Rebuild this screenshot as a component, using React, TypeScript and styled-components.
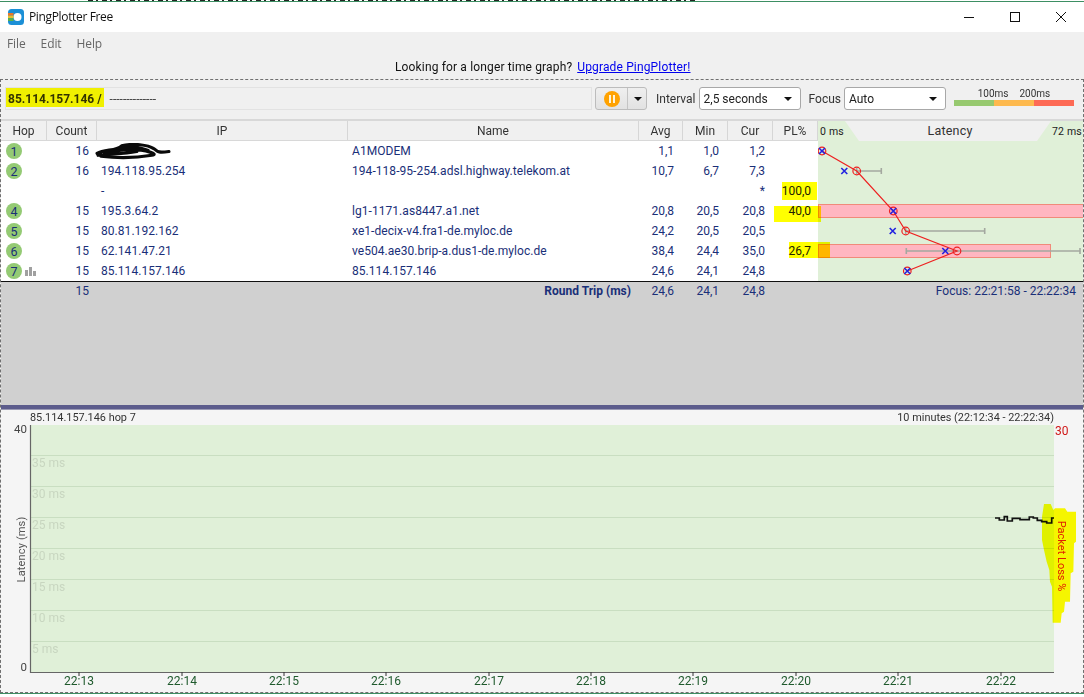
import React from "react";
import styled, { createGlobalStyle } from "styled-components";

const Global = createGlobalStyle`
  html, body { margin: 0; padding: 0; background: #fff; }
  #root { width: 1084px; height: 697px; overflow: hidden; }
  * { box-sizing: border-box; }
`;

const Page = styled.div`
  width: 1084px;
  height: 697px;
  display: flex;
  flex-direction: column;
  background: #fff;
  font-family: Roboto, "Liberation Sans", sans-serif;
  font-size: 12px;
  color: #333;
  overflow: hidden;
`;
const TopStrip = styled.div`
  height: 2px;
  flex: none;
  border-bottom: 1px solid #3d8f63;
  background: repeating-linear-gradient(90deg, #222 0 5px, #fff 5px 8px, #222 8px 10px, #fff 10px 14px) 88px 0 / 607px 1px no-repeat;
`;
const TitleBar = styled.div`
  height: 30px;
  flex: none;
  display: flex;
  align-items: center;
  padding-left: 8px;
  background: #fff;
`;
const TitleText = styled.span`
  margin-left: 5px;
  margin-top: -2px;
  font-family: "Open Sans", sans-serif;
  font-size: 12px;
  letter-spacing: -0.35px;
  color: #111;
  flex: 1;
`;
const WinButton = styled.button`
  width: 46px;
  height: 30px;
  padding: 0;
  border: 0;
  background: transparent;
  display: flex;
  align-items: center;
  justify-content: center;
`;
const MenuBar = styled.div`
  height: 23px;
  flex: none;
  display: flex;
  align-items: center;
  gap: 15px;
  padding-left: 7px;
  background: #f0f0f0;
  color: #666;
  font-family: "Open Sans", sans-serif;
  font-size: 12px;
  letter-spacing: -0.1px;
`;
const AdRow = styled.div`
  height: 24px;
  flex: none;
  display: flex;
  justify-content: flex-start;
  align-items: center;
  gap: 5px;
  padding-left: 395px;
  background: #f0f0f0;
  color: #111;
  font-size: 12px;
  letter-spacing: 0.15px;
`;
const AdLink = styled.a`
  color: #0000ee;
  text-decoration: underline;
`;
const Frame = styled.div`
  height: 614px;
  flex: none;
  display: flex;
  flex-direction: column;
  border: 1px dashed #707070;
  background: #f0f0f0;
`;
const Toolbar = styled.div`
  height: 41px;
  flex: none;
  display: flex;
  align-items: center;
  padding: 0 6px 2px 4px;
  border-bottom: 2px solid #d8d8d8;
  background: #f0f0f0;
`;
const TargetField = styled.div`
  position: relative;
  width: 587px;
  height: 23px;
  display: flex;
  align-items: center;
  padding-left: 2px;
  border: 1px solid #e2e2e2;
  color: #444;
`;
const TargetName = styled.b`
  font-size: 12px;
  color: #333;
  margin-right: 3px;
`;
const TargetDashes = styled.span`
  margin-left: 5px;
  font-size: 12px;
`;
const Mark = styled.span<{ $l: number; $t: number; $w: number; $h: number }>`
  position: absolute;
  left: ${(p) => p.$l}px;
  top: ${(p) => p.$t}px;
  width: ${(p) => p.$w}px;
  height: ${(p) => p.$h}px;
  background: #ffff00;
  mix-blend-mode: multiply;
`;
const SplitButton = styled.div`
  margin-left: 3px;
  width: 52px;
  height: 23px;
  display: grid;
  grid-template-columns: 31px 21px;
  border: 1px solid #bcbcbc;
  border-radius: 3px;
  background: linear-gradient(#efefef, #e2e2e2);
`;
const SplitPart = styled.div`
  display: flex;
  align-items: center;
  justify-content: center;
  & + & { border-left: 1px solid #c4c4c4; }
`;
const PauseDisc = styled.span`
  width: 16px;
  height: 16px;
  border-radius: 50%;
  background: #ffa200;
  display: flex;
  justify-content: center;
  align-items: center;
  gap: 2px;
`;
const PauseBar = styled.i`
  width: 2px;
  height: 8px;
  background: #fff3d8;
`;
const Caret = styled.span`
  width: 0;
  height: 0;
  border-left: 4px solid transparent;
  border-right: 4px solid transparent;
  border-top: 4px solid #111;
`;
const ToolLabel = styled.span<{ $ml: number }>`
  margin-left: ${(p) => p.$ml}px;
  margin-right: 3px;
  color: #333;
  font-size: 12px;
`;
const Select = styled.div<{ $w: number }>`
  width: ${(p) => p.$w}px;
  height: 23px;
  display: flex;
  align-items: center;
  justify-content: space-between;
  padding: 0 8px 0 4px;
  background: #fff;
  border: 1px solid #a8a8a8;
  border-radius: 3px;
  color: #222;
`;
const Legend = styled.div`
  margin-left: 8px;
  width: 120px;
  display: flex;
  flex-direction: column;
  align-self: flex-start;
  padding-top: 9px;
`;
const LegendLabels = styled.div`
  display: flex;
  justify-content: center;
  gap: 11px;
  height: 11px;
  line-height: 10px;
  font-size: 10px;
  color: #333;
`;
const LegendBar = styled.div`
  height: 6px;
  display: grid;
  grid-template-columns: 1fr 1fr 1fr;
`;
const LegendSwatch = styled.i<{ $c: string }>`
  background: ${(p) => p.$c};
`;
const columns = "46px 50px 251px 291px 44px 45px 45px 45px";
const HeaderRow = styled.div`
  height: 20px;
  flex: none;
  display: flex;
  background: #f0f0f0;
`;
const HeaderCells = styled.div`
  width: 817px;
  display: grid;
  grid-template-columns: ${columns};
  border-bottom: 1px solid #d8d8d8;
`;
const HeaderCell = styled.div`
  display: flex;
  align-items: center;
  justify-content: center;
  border-right: 1px solid #d6d6d6;
  color: #333;
  font-size: 12px;
`;
const LatencyHead = styled.div`
  position: relative;
  flex: 1;
  background: #e0f0d8;
  display: flex;
  justify-content: space-between;
  align-items: center;
  padding: 0 1px 0 2px;
  font-size: 10.5px;
  color: #222;
  letter-spacing: 0.2px;
`;
const LatencyTab = styled.div`
  position: absolute;
  left: 27px;
  right: 32px;
  top: 0;
  bottom: 0;
  background: #f0f0f0;
  clip-path: polygon(0 0, 100% 0, calc(100% - 14px) 100%, 14px 100%);
  display: flex;
  align-items: center;
  justify-content: center;
  font-size: 12.5px;
  padding: 0 0 2px 4px;
  color: #333;
`;
const Body = styled.div`
  position: relative;
  flex: none;
  height: 140px;
  display: flex;
  background: #fff;
`;
const Rows = styled.div`
  width: 817px;
  display: flex;
  flex-direction: column;
`;
const Row = styled.div`
  height: 20px;
  display: grid;
  grid-template-columns: ${columns};
  align-items: center;
  color: #1a2f78;
`;
const HopCell = styled.div`
  display: flex;
  align-items: center;
  padding-left: 5px;
  gap: 3px;
`;
const HopDisc = styled.span`
  width: 16px;
  height: 16px;
  border-radius: 50%;
  background: #94ca74;
  display: flex;
  align-items: center;
  justify-content: center;
  font-size: 12.5px;
  color: #1a2f78;
`;
const Num = styled.div<{ $pad: number }>`
  text-align: right;
  padding-right: ${(p) => p.$pad}px;
`;
const Text = styled.div`
  padding-left: 4px;
  white-space: nowrap;
  letter-spacing: 0.05px;
`;
const PlCell = styled(Num)`
  color: #222;
`;
const LatencyPlot = styled.svg`
  display: block;
  width: 265px;
  height: 140px;
  background: #e0f0d8;
`;
const Scribble = styled.svg`
  position: absolute;
  left: 90px;
  top: 2px;
  width: 84px;
  height: 17px;
`;
const Footer = styled.div`
  height: 124px;
  flex: none;
  border-top: 1px solid #111;
  background: #d0d0d0;
  color: #1a2f78;
  position: relative;
`;
const FooterRow = styled.div`
  display: grid;
  grid-template-columns: 46px 50px 542px 44px 45px 45px 1fr;
  height: 18px;
  align-items: center;
`;
const FooterTitle = styled.b`
  text-align: right;
  padding-right: 8px;
  font-size: 12px;
`;
const FooterFocus = styled.div`
  text-align: right;
  padding-right: 7px;
`;
const Divider = styled.div`
  height: 5px;
  flex: none;
  background: #5c5c8c;
  border-bottom: 1px solid #9a9ab4;
`;
const Lower = styled.div`
  flex: 1;
  min-height: 0;
  display: flex;
  flex-direction: column;
  background: #f5f5f5;
`;
const LowerHead = styled.div`
  height: 15px;
  flex: none;
  display: flex;
  justify-content: space-between;
  align-items: center;
  padding: 0 29px;
  font-size: 10.9px;
  color: #333;
`;
const Graph = styled.svg`
  display: block;
  flex: none;
  width: 1082px;
  height: 267px;
  overflow: visible;
`;
const GraphLabel = styled.text`
  font-family: Roboto, sans-serif;
`;
const Blob = styled.polygon`
  fill: #ffff00;
  mix-blend-mode: multiply;
`;
const Bottom = styled.div`
  flex: 1;
  border-top: 1px solid #3d8f63;
  background: #fff;
`;

type Hop = { n?: number; count?: number; ip: string; name: string; avg: string; min: string; cur: string; pl: string; bars?: boolean; hide?: boolean };
const hops: Hop[] = [
  { n: 1, count: 16, ip: "192.168.0.1", name: "A1MODEM", avg: "1,1", min: "1,0", cur: "1,2", pl: "", hide: true },
  { n: 2, count: 16, ip: "194.118.95.254", name: "194-118-95-254.adsl.highway.telekom.at", avg: "10,7", min: "6,7", cur: "7,3", pl: "" },
  { ip: "-", name: "", avg: "", min: "", cur: "*", pl: "100,0" },
  { n: 4, count: 15, ip: "195.3.64.2", name: "lg1-1171.as8447.a1.net", avg: "20,8", min: "20,5", cur: "20,8", pl: "40,0" },
  { n: 5, count: 15, ip: "80.81.192.162", name: "xe1-decix-v4.fra1-de.myloc.de", avg: "24,2", min: "20,5", cur: "20,5", pl: "" },
  { n: 6, count: 15, ip: "62.141.47.21", name: "ve504.ae30.brip-a.dus1-de.myloc.de", avg: "38,4", min: "24,4", cur: "35,0", pl: "26,7" },
  { n: 7, count: 15, ip: "85.114.157.146", name: "85.114.157.146", avg: "24,6", min: "24,1", cur: "24,8", pl: "", bars: true },
];

const Cross = ({ x, y }: { x: number; y: number }) => (
  <path d={`M${x - 3} ${y - 3}L${x + 3} ${y + 3}M${x + 3} ${y - 3}L${x - 3} ${y + 3}`} stroke="#2222e0" strokeWidth="1.6" fill="none" />
);
const Whisker = ({ a, b, y }: { a: number; b: number; y: number }) => (
  <path d={`M${a} ${y}H${b}M${a} ${y - 3}V${y + 3}M${b} ${y - 3}V${y + 3}`} stroke="#a4a8a0" strokeWidth="1.6" fill="none" />
);

const ringPoints: [number, number][] = [[822, 151], [856.7, 171], [893.3, 211], [905.7, 231], [957, 251], [907.3, 271]];
const crossPoints: [number, number][] = [[822, 151], [844.3, 171], [893.3, 211], [892.7, 231], [945.3, 251], [907.3, 271]];

const gridY = [{ y: 456, t: "35 ms" }, { y: 487, t: "30 ms" }, { y: 518, t: "25 ms" }, { y: 549, t: "20 ms" }, { y: 580, t: "15 ms" }, { y: 611, t: "10 ms" }, { y: 642, t: "5 ms" }];
const ticks = [[79, "22:13"], [182, "22:14"], [284, "22:15"], [386, "22:16"], [489, "22:17"], [591, "22:18"], [693, "22:19"], [796, "22:20"], [898, "22:21"], [1001, "22:22"]] as const;

const trace = "995,518 999.3,518 999.3,520 1004.3,520 1004.3,516.7 1007.3,516.7 1007.3,521 1012.3,521 1012.3,518.3 1020,518.3 1020,519.7 1029.3,519.7 1029.3,517 1033.3,517 1033.3,518 1037.3,518 1037.3,520.3 1041.7,520.3 1041.7,521.7 1046.7,521.7 1046.7,523 1051.7,523 1051.7,518 1054,518";
const blob = [[252, 42], [272, 42], [280, 60], [285, 55], [315, 55], [322, 65], [348, 65], [348, 155], [342, 160], [340, 245], [332, 250], [330, 335], [315, 335], [312, 365], [305, 370], [302, 398], [278, 398], [276, 290], [270, 275], [268, 240], [260, 215], [252, 180], [246, 150], [246, 80]]
  .map(([x, y]) => `${960 + x / 3},${490 + y / 3}`)
  .join(" ");

export default function App() {
  return (
    <Page>
      <Global />
      <TopStrip />
      <TitleBar>
        <svg width="16" height="16" viewBox="0 0 16 16">
          <rect width="16" height="16" rx="3.5" fill="#1b8fd6" />
          <circle cx="9.5" cy="8" r="4" fill="#fff" />
          <rect x="0" y="4" width="5.5" height="2.6" fill="#e8762c" />
          <rect x="0" y="6.6" width="5.5" height="2.6" fill="#e8c12c" />
          <rect x="0" y="9.2" width="5.5" height="2.8" fill="#58b04a" />
        </svg>
        <TitleText>PingPlotter Free</TitleText>
        <WinButton aria-label="Minimize">
          <svg width="10" height="10" viewBox="0 0 10 10"><path d="M0 5.5H10" stroke="#111" /></svg>
        </WinButton>
        <WinButton aria-label="Maximize">
          <svg width="10" height="10" viewBox="0 0 10 10"><rect x=".5" y=".5" width="9" height="9" fill="none" stroke="#111" /></svg>
        </WinButton>
        <WinButton aria-label="Close">
          <svg width="10" height="10" viewBox="0 0 10 10"><path d="M0 0L10 10M10 0L0 10" stroke="#111" /></svg>
        </WinButton>
      </TitleBar>
      <MenuBar>
        <span>File</span>
        <span>Edit</span>
        <span>Help</span>
      </MenuBar>
      <AdRow>
        <span>Looking for a longer time graph?</span>
        <AdLink href="#">Upgrade PingPlotter!</AdLink>
      </AdRow>
      <Frame>
        <Toolbar>
          <TargetField>
            <TargetName>85.114.157.146 /</TargetName>
            <TargetDashes>--------------</TargetDashes>
            <Mark $l={0} $t={0} $w={98} $h={19} />
          </TargetField>
          <SplitButton>
            <SplitPart>
              <PauseDisc>
                <PauseBar />
                <PauseBar />
              </PauseDisc>
            </SplitPart>
            <SplitPart>
              <Caret />
            </SplitPart>
          </SplitButton>
          <ToolLabel $ml={9}>Interval</ToolLabel>
          <Select $w={102}>
            <span>2,5 seconds</span>
            <Caret />
          </Select>
          <ToolLabel $ml={8}>Focus</ToolLabel>
          <Select $w={102}>
            <span>Auto</span>
            <Caret />
          </Select>
          <Legend>
            <LegendLabels>
              <span>100ms</span>
              <span>200ms</span>
            </LegendLabels>
            <LegendBar>
              <LegendSwatch $c="#97c96f" />
              <LegendSwatch $c="#fdb94e" />
              <LegendSwatch $c="#fd6a55" />
            </LegendBar>
          </Legend>
        </Toolbar>
        <HeaderRow>
          <HeaderCells>
            {["Hop", "Count", "IP", "Name", "Avg", "Min", "Cur", "PL%"].map((h) => (
              <HeaderCell key={h}>{h}</HeaderCell>
            ))}
          </HeaderCells>
          <LatencyHead>
            <span>0 ms</span>
            <LatencyTab>Latency</LatencyTab>
            <span>72 ms</span>
          </LatencyHead>
        </HeaderRow>
        <Body>
          <Rows>
            {hops.map((h, i) => (
              <Row key={i}>
                <HopCell>
                  {h.n ? <HopDisc>{h.n}</HopDisc> : null}
                  {h.bars ? (
                    <svg width="11" height="9" viewBox="0 0 11 9">
                      <rect y="3" width="3" height="6" fill="#a0a0a0" />
                      <rect x="4" width="3" height="9" fill="#a0a0a0" />
                      <rect x="8" y="4" width="3" height="5" fill="#a0a0a0" />
                    </svg>
                  ) : null}
                </HopCell>
                <Num $pad={8}>{h.count}</Num>
                <Text>{h.hide ? "" : h.ip}</Text>
                <Text>{h.name}</Text>
                <Num $pad={9}>{h.avg}</Num>
                <Num $pad={9}>{h.min}</Num>
                <Num $pad={8}>{h.cur}</Num>
                <PlCell $pad={7}>{h.pl}</PlCell>
              </Row>
            ))}
          </Rows>
          <LatencyPlot viewBox="818 141 265 140">
            <rect x="818.5" y="204.5" width="265" height="13" fill="#ffb6c1" stroke="#f08a7a" />
            <rect x="818.5" y="244.5" width="232" height="13" fill="#ffb6c1" stroke="#f08a7a" />
            <Whisker a={856.7} b={881.3} y={171} />
            <Whisker a={905.7} b={984.7} y={231} />
            <Whisker a={906.3} b={1080} y={251} />
            <polyline points={ringPoints.map((p) => p.join(",")).join(" ")} fill="none" stroke="#ee2020" strokeWidth="1.2" />
            {ringPoints.map(([x, y]) => (
              <circle key={y} cx={x} cy={y} r="3.8" fill="none" stroke="#ee2020" strokeWidth="1.2" />
            ))}
            {crossPoints.map(([x, y]) => (
              <Cross key={y} x={x} y={y} />
            ))}
          </LatencyPlot>
          <Scribble viewBox="0 0 84 18">
            <path d="M4 11C12 6 24 9 30 3C42 0 58 2 64 6C68 8 66 11 80 9M5 13C20 11 30 12 46 9M8 14C24 16 44 16 62 13C70 12 56 7 40 7C28 7 18 9 12 11M26 6C36 4 50 4 58 8" fill="none" stroke="#0a0a0a" strokeWidth="3.4" strokeLinecap="round" />
          </Scribble>
          <Mark $l={781} $t={41} $w={35} $h={18} />
          <Mark $l={773} $t={65} $w={47} $h={16} />
          <Mark $l={788} $t={101} $w={41} $h={16} />
        </Body>
        <Footer>
          <FooterRow>
            <span />
            <Num $pad={8}>15</Num>
            <FooterTitle>Round Trip (ms)</FooterTitle>
            <Num $pad={9}>24,6</Num>
            <Num $pad={9}>24,1</Num>
            <Num $pad={8}>24,8</Num>
            <FooterFocus>Focus: 22:21:58 - 22:22:34</FooterFocus>
          </FooterRow>
        </Footer>
        <Divider />
        <Lower>
          <LowerHead>
            <span>85.114.157.146 hop 7</span>
            <span>10 minutes (22:12:34 - 22:22:34)</span>
          </LowerHead>
          <Graph viewBox="1 425 1082 267">
            <rect x="30" y="425" width="1024" height="247" fill="#e0f0d8" />
            {gridY.map((g) => (
              <g key={g.y}>
                <path d={`M30 ${g.y - 0.5}H1054`} stroke="#c9dec1" />
                <GraphLabel x="32" y={g.y + 11} fontSize="12" fill="#c8d6c0">{g.t}</GraphLabel>
              </g>
            ))}
            <path d="M30.5 425V672.5H1054" fill="none" stroke="#666" strokeWidth="1.2" />
            {ticks.map(([x, t]) => (
              <g key={t}>
                <path d={`M${x} 672V676`} stroke="#333" />
                <GraphLabel x={x} y="685" textAnchor="middle" fontSize="12" fill="#1f5a2d">{t}</GraphLabel>
              </g>
            ))}
            <GraphLabel x="27" y="433" textAnchor="end" fontSize="11.5" fill="#444">40</GraphLabel>
            <GraphLabel x="27" y="671" textAnchor="end" fontSize="11.5" fill="#444">0</GraphLabel>
            <GraphLabel x="1055" y="435" fontSize="12" fill="#d01818">30</GraphLabel>
            <GraphLabel transform="translate(25 549.5) rotate(-90)" textAnchor="middle" fontSize="11" letterSpacing="0.15" fill="#555">Latency (ms)</GraphLabel>
            <GraphLabel transform="translate(1058 556) rotate(90)" textAnchor="middle" fontSize="11" fill="#e02020">Packet Loss %</GraphLabel>
            <polyline points={trace} fill="none" stroke="#111" strokeWidth="1.7" />
            <Blob points={blob} />
          </Graph>
        </Lower>
      </Frame>
      <Bottom />
    </Page>
  );
}
